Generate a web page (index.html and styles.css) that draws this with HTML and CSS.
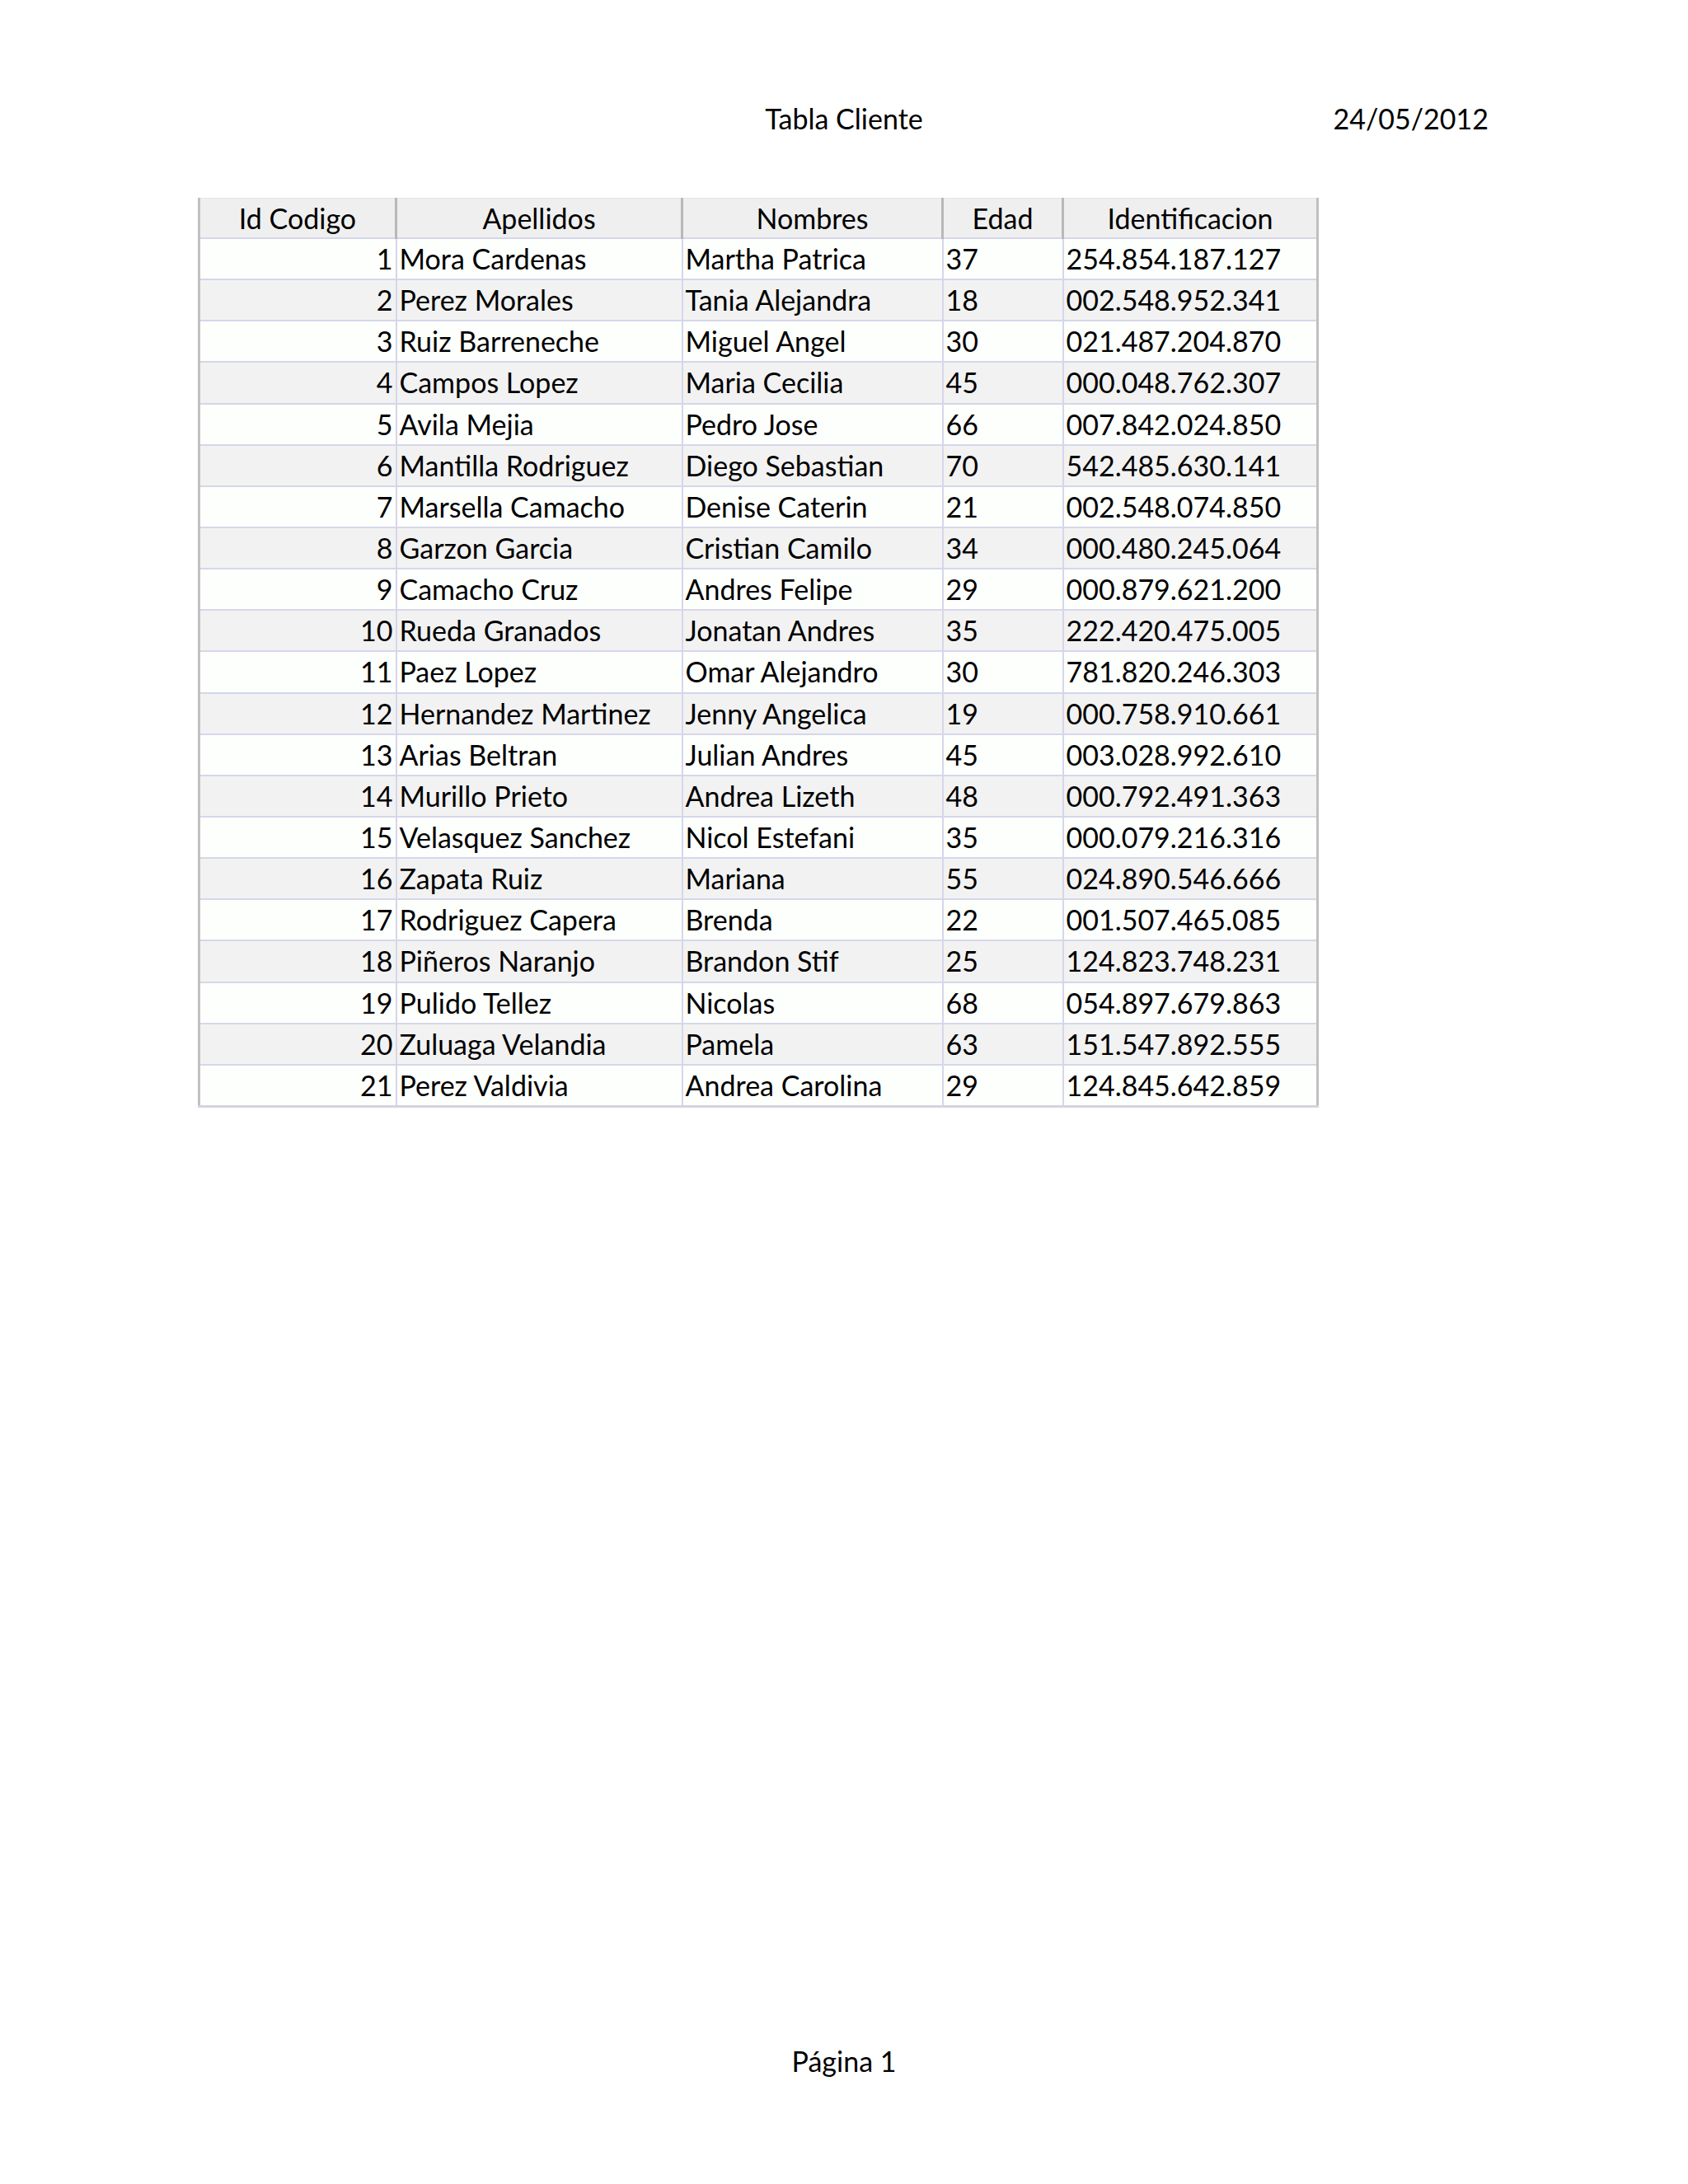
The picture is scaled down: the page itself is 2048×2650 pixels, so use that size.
FILE: index.html
```html
<!DOCTYPE html>
<html lang="es">
<head>
<meta charset="utf-8">
<title>Tabla Cliente</title>
<link rel="stylesheet" href="styles.css">
</head>
<body>
<div class="page">
  <header class="page-header">
    <span></span>
    <span class="title">Tabla Cliente</span>
    <span class="date">24/05/2012</span>
  </header>
  <main class="content">
    <table class="sheet">
      <colgroup>
        <col class="c1"><col class="c2"><col class="c3"><col class="c4"><col class="c5">
      </colgroup>
      <thead>
        <tr><th>Id Codigo</th><th>Apellidos</th><th>Nombres</th><th>Edad</th><th>Identificacion</th></tr>
      </thead>
      <tbody>
        <tr><td class="num">1</td><td>Mora Cardenas</td><td>Martha Patrica</td><td>37</td><td>254.854.187.127</td></tr>
        <tr><td class="num">2</td><td>Perez Morales</td><td>Tania Alejandra</td><td>18</td><td>002.548.952.341</td></tr>
        <tr><td class="num">3</td><td>Ruiz Barreneche</td><td>Miguel Angel</td><td>30</td><td>021.487.204.870</td></tr>
        <tr><td class="num">4</td><td>Campos Lopez</td><td>Maria Cecilia</td><td>45</td><td>000.048.762.307</td></tr>
        <tr><td class="num">5</td><td>Avila Mejia</td><td>Pedro Jose</td><td>66</td><td>007.842.024.850</td></tr>
        <tr><td class="num">6</td><td>Mantilla Rodriguez</td><td>Diego Sebastian</td><td>70</td><td>542.485.630.141</td></tr>
        <tr><td class="num">7</td><td>Marsella Camacho</td><td>Denise Caterin</td><td>21</td><td>002.548.074.850</td></tr>
        <tr><td class="num">8</td><td>Garzon Garcia</td><td>Cristian Camilo</td><td>34</td><td>000.480.245.064</td></tr>
        <tr><td class="num">9</td><td>Camacho Cruz</td><td>Andres Felipe</td><td>29</td><td>000.879.621.200</td></tr>
        <tr><td class="num">10</td><td>Rueda Granados</td><td>Jonatan Andres</td><td>35</td><td>222.420.475.005</td></tr>
        <tr><td class="num">11</td><td>Paez Lopez</td><td>Omar Alejandro</td><td>30</td><td>781.820.246.303</td></tr>
        <tr><td class="num">12</td><td>Hernandez Martinez</td><td>Jenny Angelica</td><td>19</td><td>000.758.910.661</td></tr>
        <tr><td class="num">13</td><td>Arias Beltran</td><td>Julian Andres</td><td>45</td><td>003.028.992.610</td></tr>
        <tr><td class="num">14</td><td>Murillo Prieto</td><td>Andrea Lizeth</td><td>48</td><td>000.792.491.363</td></tr>
        <tr><td class="num">15</td><td>Velasquez Sanchez</td><td>Nicol Estefani</td><td>35</td><td>000.079.216.316</td></tr>
        <tr><td class="num">16</td><td>Zapata Ruiz</td><td>Mariana</td><td>55</td><td>024.890.546.666</td></tr>
        <tr><td class="num">17</td><td>Rodriguez Capera</td><td>Brenda</td><td>22</td><td>001.507.465.085</td></tr>
        <tr><td class="num">18</td><td>Piñeros Naranjo</td><td>Brandon Stif</td><td>25</td><td>124.823.748.231</td></tr>
        <tr><td class="num">19</td><td>Pulido Tellez</td><td>Nicolas</td><td>68</td><td>054.897.679.863</td></tr>
        <tr><td class="num">20</td><td>Zuluaga Velandia</td><td>Pamela</td><td>63</td><td>151.547.892.555</td></tr>
        <tr><td class="num">21</td><td>Perez Valdivia</td><td>Andrea Carolina</td><td>29</td><td>124.845.642.859</td></tr>
      </tbody>
    </table>
  </main>
  <footer class="page-footer">Página 1</footer>
</div>
</body>
</html>
```

FILE: styles.css
```css
html, body {
  margin: 0;
  padding: 0;
  background: #ffffff;
}

body {
  font-family: Lato, "Open Sans", "Liberation Sans", sans-serif;
  font-size: 34px;
  color: #000000;
}

.page {
  width: 2048px;
  height: 2650px;
  display: flex;
  flex-direction: column;
}

.page-header {
  display: grid;
  grid-template-columns: 1fr auto 1fr;
  padding: 122px 242px 0 242px;
  line-height: 44px;
}

.page-header .date {
  text-align: right;
}

.content {
  padding: 74px 0 0 240px;
}

.sheet {
  border-collapse: collapse;
  table-layout: fixed;
  width: 1357px;
  line-height: 44px;
}

.c1 { width: 239px; }
.c2 { width: 347px; }
.c3 { width: 316px; }
.c4 { width: 146px; }
.c5 { width: 309px; }

.sheet th {
  font-weight: normal;
  text-align: center;
  background: #efefef;
  height: 47px;
  padding: 0;
  border-left: 3px solid #b8b8b8;
  border-top: 1px solid #e4e4e4;
  border-bottom: 2px solid #d6d6ea;
}

.sheet td {
  height: 48.15px;
  padding: 0 4px 0 3px;
  border-left: 2px solid #d6d6ea;
  border-bottom: 2px solid #d6d6ea;
  white-space: nowrap;
  overflow: hidden;
}

.sheet th:first-child,
.sheet td:first-child {
  border-left: 3px solid #c0c0c0;
}

.sheet th:last-child,
.sheet td:last-child {
  border-right: 3px solid #c0c0c0;
}

.sheet tbody tr:nth-child(odd) td {
  background: #fdfffd;
}

.sheet tbody tr:nth-child(even) td {
  background: #f2f2f2;
}

.sheet tbody tr:last-child td {
  border-bottom: 3px solid #d4d4de;
}

.sheet td.num {
  text-align: right;
  padding-right: 3px;
}

.page-footer {
  margin-top: auto;
  text-align: center;
  line-height: 44px;
  padding-bottom: 127px;
}
```
